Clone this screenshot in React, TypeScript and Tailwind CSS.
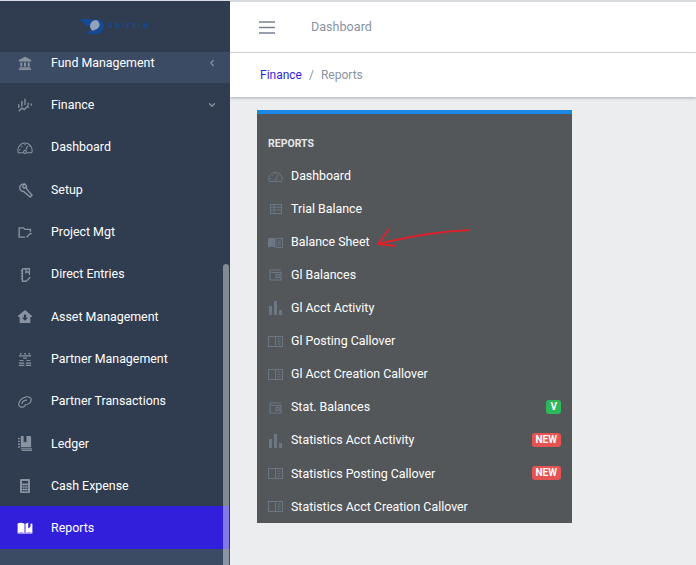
import { ChevronDown, ChevronLeft } from 'lucide-react';
import type { ReactNode } from 'react';

const font = { fontFamily: 'Roboto, sans-serif' };

function LandmarkIcon() {
  return (
    <svg viewBox="0 0 18 18" className="h-[14px] w-[14px]" fill="currentColor">
      <path d="M9 1 1 5v2h16V5zM3 8.500h2.500v5H3zM7.750 8.500h2.500v5h-2.500zM12.500 8.500H15v5h-2.500zM2 14.500h14V16H2zM1 16.500h16V18H1z" />
    </svg>
  );
}

function FinanceIcon() {
  return (
    <svg viewBox="0 0 18 18" className="h-[14px] w-[14px]" fill="none" stroke="currentColor" strokeWidth="1.700">
      <path d="M5 4v7M9 1v8M13 6v4M17 7v3M1 8v5M1 17l4-4 3 2 4-4 2 1" />
    </svg>
  );
}

function GaugeIcon() {
  return (
    <svg viewBox="0 0 18 14" className="h-[13px] w-[16px]" fill="none" stroke="currentColor" strokeWidth="1.200">
      <path d="M7 13H1.500A8 8 0 0 1 1 10a8 8 0 0 1 16 0 8 8 0 0 1-.500 3H11" />
      <circle cx="9" cy="12" r="1.600" />
      <path d="M9.500 10.500 12 5M4 9.500h-1.500M5 5.500l1 1M9 3v1.500M14 6l1-1" />
    </svg>
  );
}

function WrenchIcon() {
  return (
    <svg viewBox="0 0 16 16" className="h-[15px] w-[15px]" fill="none" stroke="currentColor" strokeWidth="1.500">
      <path d="M6 1a4 4 0 0 0-4 5l1.500 2.500L6 9l7 6 2-2-6-7c.5-2-.500-4-2-5L5 3.500 5.500 5l1.500.5L9 4" />
    </svg>
  );
}

function FolderEditIcon() {
  return (
    <svg viewBox="0 0 18 14" className="h-[11px] w-[14px]" fill="none" stroke="currentColor" strokeWidth="1.800">
      <path d="M9 13H1.500V1H7l2 2h7v3" />
      <path d="M11 13l5-5 1.500 1" />
    </svg>
  );
}

function EntriesIcon() {
  return (
    <svg viewBox="0 0 14 18" className="h-[14px] w-[11px]" fill="none" stroke="currentColor" strokeWidth="1.700">
      <path d="M3 1h9v8M3 1v16h5M1 3.500h3M1 7h3M1 10.500h3M1 14h3M7.500 1v5l2-1.500L11 6M8 17l5-5" />
    </svg>
  );
}

function HouseIcon() {
  return (
    <svg viewBox="0 0 18 17" className="h-[13px] w-[14px]">
      <path d="M9 0 0 7.500V9h2v8h14V9h2V7.500z" fill="currentColor" />
      <path d="M7.500 6h3v4H13l-4 4-4-4h2.500z" fill="#303c50" />
    </svg>
  );
}

function PartnerIcon() {
  return (
    <svg viewBox="0 0 18 17" className="h-[13px] w-[14px]" fill="currentColor">
      <path d="M2.500 0h2v2h-2zM8 0h2v2H8zM13.500 0h2v2h-2zM1 3h16v1.500H1zM6.500 6h5v1.500h-5zM2 9h5v1.500H2zM11 9h5v1.500h-5zM1 12.500h7V14H1zM10 12.500h7V14h-7zM1 15.500h7V17H1zM10 15.500h7V17h-7z" />
    </svg>
  );
}

function LinkIcon() {
  return (
    <svg viewBox="0 0 18 15" className="h-[12px] w-[14px]" fill="none" stroke="currentColor" strokeWidth="1.500">
      <path d="M5 14C2 14 .5 12 1 9.500 2 5 6 2 10 1c5-1 7 1.500 7 3.500 0 4-4 6.500-8 6.500" />
      <path d="M5 10c.500-3 3-5 6.500-5" />
      <path d="M5 14c2 .3 4-1 4.500-3" />
    </svg>
  );
}

function LedgerIcon() {
  return (
    <svg viewBox="0 0 16 16" className="h-[15px] w-[15px]" fill="currentColor">
      <path d="M3 0h3v7l1.500-1L9 7V0h3.500A1.500 1.500 0 0 1 14 1.500V12H3zM0 2h2v1.500H0zM0 5h2v1.500H0zM0 8h2v1.500H0zM0 11h2v1.500H0zM3 13h12v1.500H3z" />
      <path d="M4 15h11v1H4z" />
    </svg>
  );
}

function CalcIcon() {
  return (
    <svg viewBox="0 0 10 14" className="h-[14px] w-[10px]">
      <rect x="0" y="0" width="10" height="14" rx="1" fill="currentColor" />
      <path d="M2 2h6v2.500H2zM2 6h1.500v1.500H2zM4.250 6h1.500v1.500h-1.500zM6.500 6H8v1.500H6.500zM2 8.500h1.500V10H2zM4.250 8.500h1.500V10h-1.500zM6.500 8.500H8V10H6.500zM2 11h1.500v1.500H2zM4.250 11h1.500v1.500h-1.500zM6.500 11H8v1.500H6.500z" fill="#303c50" />
    </svg>
  );
}

function ReportsIcon() {
  return (
    <svg viewBox="0 0 16 13" className="h-[12px] w-[16px]" fill="currentColor">
      <path d="M0 1.500C2 .500 5 .500 7.500 2v10C5 11 2 11 0 12zM8.500 2c1-.500 2-1 3-1.500V7l1.500-1 1-1V1.500l2 .500v10c-2.500-1-5-1-7.500 0zM0 12.500h16V13H0z" />
    </svg>
  );
}

function ListPanelIcon() {
  return (
    <svg viewBox="0 0 15 11" className="h-[11px] w-[15px]" fill="none" stroke="currentColor" strokeWidth="1">
      <rect x="0.5" y="0.5" width="14" height="10" />
      <path d="M7.5 0.5v10M9.500 3h3M9.500 5.500h3M9.500 8h3" />
    </svg>
  );
}

function TableIcon() {
  return (
    <svg viewBox="0 0 12 10" className="h-[10px] w-[12px]" fill="none" stroke="currentColor" strokeWidth="1">
      <rect x="0.5" y="0.5" width="11" height="9" />
      <path d="M0.500 3.200h11M0.500 6h11M4 0.500v9" />
    </svg>
  );
}

function BookIcon() {
  return (
    <svg viewBox="0 0 15 11" className="h-[11px] w-[15px]">
      <path d="M0 1.500c2-1 4.500-1 7 0v9c-2.500-1-5-1-7 0z" fill="currentColor" />
      <path d="M8 1.500h6.500v9H8z M9.500 4h3.500M9.500 6h3.500M9.500 8h3.500" fill="none" stroke="currentColor" />
    </svg>
  );
}

function WalletIcon() {
  return (
    <svg viewBox="0 0 13 12" className="h-[12px] w-[13px]" fill="none" stroke="currentColor" strokeWidth="1.200">
      <path d="M12 1H2a1 1 0 0 0-1 1v8a1 1 0 0 0 1 1h10V3.500H2" />
      <rect x="7" y="5.500" width="3" height="3" />
    </svg>
  );
}

function BarsIcon() {
  return (
    <svg viewBox="0 0 13 14" className="h-[14px] w-[13px]" fill="currentColor">
      <rect x="0" y="5" width="3" height="9" />
      <rect x="5" y="0" width="3" height="14" />
      <rect x="10" y="9" width="3" height="5" />
    </svg>
  );
}

function GriffinLogo() {
  return (
    <div className="flex items-center gap-[3px]">
      <svg viewBox="0 0 26 17" className="h-[17px] w-[26px]" fill="#154a96">
        <path d="M0 1h13l2 3-2 6-3-2-2 1-3-4z" />
        <circle cx="17" cy="8" r="6" fill="#8fa3bd" />
        <path d="M17 1c5 0 8 3 8 7.500S21 16 17 16H7l3-3c3 0 8-1 10-4s-1-6-3-8z" />
      </svg>
      <span className="text-[7px] font-bold tracking-[2.4px] text-[#154a96]">GRIFFIN</span>
    </div>
  );
}

type NavItem = { label: string; icon: ReactNode; chevron?: ReactNode; className?: string };

const navItems: NavItem[] = [
  {
    label: 'Fund Management',
    icon: <LandmarkIcon />,
    chevron: <ChevronLeft size={10} strokeWidth={3} />,
    className: 'bg-[#3c4b64]',
  },
  { label: 'Finance', icon: <FinanceIcon />, chevron: <ChevronDown size={10} strokeWidth={3} /> },
  { label: 'Dashboard', icon: <GaugeIcon /> },
  { label: 'Setup', icon: <WrenchIcon /> },
  { label: 'Project Mgt', icon: <FolderEditIcon /> },
  { label: 'Direct Entries', icon: <EntriesIcon /> },
  { label: 'Asset Management', icon: <HouseIcon /> },
  { label: 'Partner Management', icon: <PartnerIcon /> },
  { label: 'Partner Transactions', icon: <LinkIcon /> },
  { label: 'Ledger', icon: <LedgerIcon /> },
  { label: 'Cash Expense', icon: <CalcIcon /> },
];

const reportItems: { label: string; icon: ReactNode; badge?: string }[] = [
  { label: 'Dashboard', icon: <GaugeIcon /> },
  { label: 'Trial Balance', icon: <TableIcon /> },
  { label: 'Balance Sheet', icon: <BookIcon /> },
  { label: 'Gl Balances', icon: <WalletIcon /> },
  { label: 'Gl Acct Activity', icon: <BarsIcon /> },
  { label: 'Gl Posting Callover', icon: <ListPanelIcon /> },
  { label: 'Gl Acct Creation Callover', icon: <ListPanelIcon /> },
  { label: 'Stat. Balances', icon: <WalletIcon />, badge: 'V' },
  { label: 'Statistics Acct Activity', icon: <BarsIcon />, badge: 'NEW' },
  { label: 'Statistics Posting Callover', icon: <ListPanelIcon />, badge: 'NEW' },
  { label: 'Statistics Acct Creation Callover', icon: <ListPanelIcon /> },
];

function Sidebar() {
  return (
    <aside className="relative flex h-full w-[230px] shrink-0 flex-col overflow-hidden border-t border-[#d8dbe0] bg-[#303c50]">
      <div className="flex h-[51px] shrink-0 items-center justify-center">
        <GriffinLogo />
      </div>
      <div className="min-h-0 flex-1 overflow-hidden">
        <nav className="-mt-[11px] text-[12.4px] text-white">
          {navItems.map((item) => (
            <div key={item.label} className={`flex h-[42.3px] items-center pt-[2px] pr-[13px] pl-[17px] ${item.className ?? ''}`}>
              <span className="mr-[18px] flex w-[16px] shrink-0 justify-center text-[#8a93a2]">{item.icon}</span>
              <span className="flex-1">{item.label}</span>
              {item.chevron && <span className="text-[#8a93a2]">{item.chevron}</span>}
            </div>
          ))}
          <div className="flex h-[42.3px] items-center bg-[#321fdb] pt-[2px] pl-[17px]">
            <span className="mr-[18px] flex w-[16px] shrink-0 justify-center">
              <ReportsIcon />
            </span>
            Reports
          </div>
          <div className="h-[20px] bg-[#3c4b64]" />
        </nav>
      </div>
      {/* scrollbar over the nav */}
      <div className="absolute top-[263px] right-[1px] bottom-0 w-[6px] rounded-t-full bg-white/40" />
    </aside>
  );
}

function ReportsCard() {
  return (
    <div className="relative mt-[13px] ml-[27px] w-[315px] border-t-[4px] border-[#1e88e5] bg-[#54575a] px-[11px] pt-[21px] text-[12.4px] text-white">
      <div className="mb-[5.5px] h-[18px] text-[10.5px] leading-[18px] font-bold text-[#e4e7ea]">REPORTS</div>
      {reportItems.map((item) => (
        <div key={item.label} className="flex h-[33.1px] items-center pt-[2px]">
          <span className="flex w-[23px] shrink-0 items-center justify-center pr-[8px] text-[#6b7785]">{item.icon}</span>
          <span className="flex-1">{item.label}</span>
          {item.badge && (
            <span
              className={`-mt-[2px] rounded-[3px] px-[4px] text-[10px] leading-[14px] font-bold ${
                item.badge === 'V' ? 'bg-[#2eb85c]' : 'bg-[#e55353]'
              }`}
            >
              {item.badge}
            </span>
          )}
        </div>
      ))}
      {/* red arrow scribbled on the screenshot */}
      <svg className="absolute top-[108px] left-[115px] h-[30px] w-[105px]" viewBox="0 0 105 30" fill="none" stroke="#e0202a" strokeWidth="1.800">
        <path d="M98 8C75 9 45 13 14 20L6 22M17 7 6 22l17 2" />
      </svg>
    </div>
  );
}

export default function App() {
  return (
    <div className="flex h-[565px] w-[696px] overflow-hidden bg-[#ebedef]" style={font}>
      <Sidebar />
      <main className="min-w-0 flex-1">
        <header className="flex h-[53px] items-center border-t-2 border-b border-t-[#d8dbe0] border-b-[#d8dbe0] bg-white pl-[29px]">
          <svg viewBox="0 0 16 13" className="h-[13px] w-[16px] text-[#768192]" fill="none" stroke="currentColor" strokeWidth="1.300">
            <path d="M0 1h16M0 6.500h16M0 12h16" />
          </svg>
          <span className="ml-[36px] text-[12.6px] text-[#8a93a2]">Dashboard</span>
        </header>
        <div className="flex h-[44px] items-center bg-white pl-[30px] text-[12px] shadow-[0_1px_3px_rgba(60,75,100,0.4)]">
          <span className="text-[#321fdb]">Finance</span>
          <span className="mx-[7px] text-[#8a93a2]">/</span>
          <span className="text-[#8a93a2]">Reports</span>
        </div>
        <ReportsCard />
      </main>
    </div>
  );
}
